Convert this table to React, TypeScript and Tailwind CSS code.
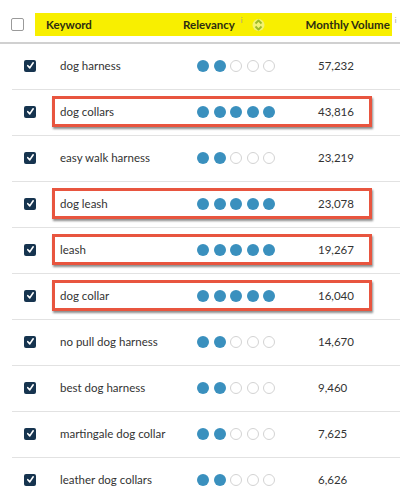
import React from 'react';

type Row = { keyword: string; score: number; volume: string; marked?: boolean };

const rows: Row[] = [
  { keyword: 'dog harness', score: 2, volume: '57,232' },
  { keyword: 'dog collars', score: 5, volume: '43,816', marked: true },
  { keyword: 'easy walk harness', score: 2, volume: '23,219' },
  { keyword: 'dog leash', score: 5, volume: '23,078', marked: true },
  { keyword: 'leash', score: 5, volume: '19,267', marked: true },
  { keyword: 'dog collar', score: 5, volume: '16,040', marked: true },
  { keyword: 'no pull dog harness', score: 2, volume: '14,670' },
  { keyword: 'best dog harness', score: 2, volume: '9,460' },
  { keyword: 'martingale dog collar', score: 2, volume: '7,625' },
  { keyword: 'leather dog collars', score: 2, volume: '6,626' },
];

const CheckedBox = () => (
  <div className="w-[12px] h-[12px] rounded-[2px] bg-[#16344f] flex items-center justify-center shrink-0">
    <svg width="9" height="9" viewBox="0 0 10 10">
      <path d="M2 5.2 L4.2 7.6 L8 2" fill="none" stroke="#fff" strokeWidth="1.8" strokeLinecap="round" strokeLinejoin="round" />
    </svg>
  </div>
);

const Dots = ({ score }: { score: number }) => (
  <div className="flex gap-[4.5px]">
    {[0, 1, 2, 3, 4].map((i) =>
      i < score ? (
        <span key={i} className="w-[12px] h-[12px] rounded-full bg-[#3a90be]" />
      ) : (
        <span key={i} className="w-[12px] h-[12px] rounded-full border border-[#d3d3d3] bg-white" />
      )
    )}
  </div>
);

const SortIcon = () => (
  <svg width="13" height="14" viewBox="0 0 13 14">
    <circle cx="6.5" cy="7" r="6" fill="#eef3c0" opacity="0.6" />
    <path d="M3.5 5.5 L6.5 2.5 L9.5 5.5" fill="none" stroke="#9bba2a" strokeWidth="1.8" strokeLinejoin="round" />
    <path d="M3.5 8.5 L6.5 11.5 L9.5 8.5" fill="none" stroke="#9bba2a" strokeWidth="1.8" strokeLinejoin="round" />
  </svg>
);

const App: React.FC = () => {
  return (
    <div className="w-[400px] h-[500px] bg-white overflow-hidden font-['Lato','Liberation_Sans',sans-serif] text-[#333]">
      {/* Header */}
      <div className="h-[44px] border-b-2 border-[#d0d0d0] flex items-start pt-[13px]">
        <div className="ml-[11px] mt-[5px] w-[13px] h-[13px] rounded-[2px] border-[1.5px] border-[#9a9a9a] bg-white shrink-0" />
        <div className="ml-[11px] w-[357px] h-[23px] shrink-0 bg-[#f8ef00] flex items-center text-[11.5px] font-bold text-[#2d2d12] whitespace-nowrap">
          <span className="ml-[11px] w-[137px] shrink-0">Keyword</span>
          <span className="shrink-0">Relevancy</span>
          <span className="ml-[6px] -mt-[8px] text-[7px] font-normal text-[#999]">i</span>
          <span className="ml-[9px] flex shrink-0"><SortIcon /></span>
          <span className="ml-[41px] shrink-0">Monthly Volume</span>
          <span className="ml-[5px] -mt-[8px] text-[7px] font-normal text-[#999]">i</span>
        </div>
      </div>

      {/* Rows */}
      {rows.map((r) => (
        <div key={r.keyword} className="ml-[12px] h-[46px] border-b border-[#e2e2e2] flex items-center pb-[2px]">
          <div className="ml-[12px]">
            <CheckedBox />
          </div>
          <div
            className={
              'ml-[16px] w-[320px] h-[31px] flex items-center border-[3px] ' +
              (r.marked ? 'border-[#e8553f] shadow-[1px_2px_2px_rgba(0,0,0,0.45)]' : 'border-transparent')
            }
          >
            <span className="ml-[5px] w-[137px] text-[11.5px] whitespace-nowrap">{r.keyword}</span>
            <div className="w-[121px]">
              <Dots score={r.score} />
            </div>
            <span className="text-[11.5px]">{r.volume}</span>
          </div>
        </div>
      ))}
    </div>
  );
};

export default App;
